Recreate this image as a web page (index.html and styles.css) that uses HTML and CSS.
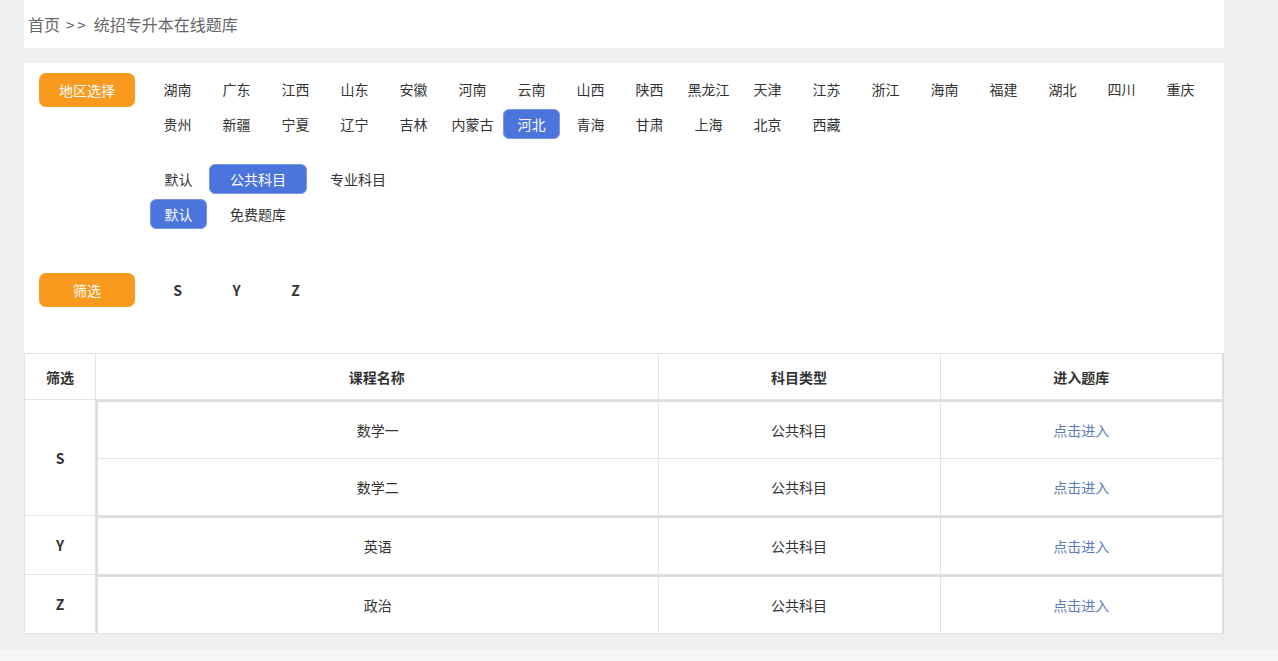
FILE: index.html
```html
<!DOCTYPE html>
<html lang="zh-CN">
<head>
<meta charset="utf-8">
<title>统招专升本在线题库</title>
<link rel="stylesheet" href="styles.css">
</head>
<body>
<div class="wrap">
  <div class="crumb">首页<span class="sep">&gt;&gt;</span>统招专升本在线题库</div>
  <div class="panel">
    <div class="panel-top">
      <div class="row">
        <div class="tag">地区选择</div>
        <div class="opts">
          <div class="regions">
            <span class="opt">湖南</span><span class="opt">广东</span><span class="opt">江西</span><span class="opt">山东</span><span class="opt">安徽</span><span class="opt">河南</span><span class="opt">云南</span><span class="opt">山西</span><span class="opt">陕西</span><span class="opt">黑龙江</span><span class="opt">天津</span><span class="opt">江苏</span><span class="opt">浙江</span><span class="opt">海南</span><span class="opt">福建</span><span class="opt">湖北</span><span class="opt">四川</span><span class="opt">重庆</span><span class="opt">贵州</span><span class="opt">新疆</span><span class="opt">宁夏</span><span class="opt">辽宁</span><span class="opt">吉林</span><span class="opt">内蒙古</span><span class="opt active">河北</span><span class="opt">青海</span><span class="opt">甘肃</span><span class="opt">上海</span><span class="opt">北京</span><span class="opt">西藏</span>
          </div>
          <div class="subjects">
            <div class="line"><span class="opt">默认</span><span class="opt wide active">公共科目</span><span class="opt wide">专业科目</span></div>
            <div class="line"><span class="opt active">默认</span><span class="opt wide">免费题库</span></div>
          </div>
        </div>
      </div>
      <div class="row filter">
        <div class="tag">筛选</div>
        <div class="letters"><span class="opt b">S</span><span class="opt b">Y</span><span class="opt b">Z</span></div>
      </div>
    </div>
    <table class="grid">
      <colgroup><col class="c0"><col></colgroup>
      <thead>
        <tr><th class="first">筛选</th><th class="inner-cell">
          <table class="inner head"><colgroup><col class="c1"><col class="c2"><col class="c3"></colgroup>
            <tr><th>课程名称</th><th>科目类型</th><th>进入题库</th></tr>
          </table>
        </th></tr>
      </thead>
      <tbody>
        <tr><td class="first b">S</td><td class="inner-cell">
          <table class="inner body"><colgroup><col class="c1b"><col class="c2"><col class="c3"></colgroup>
            <tr><td>数学一</td><td>公共科目</td><td><a href="#">点击进入</a></td></tr>
            <tr class="last"><td>数学二</td><td>公共科目</td><td><a href="#">点击进入</a></td></tr>
          </table>
        </td></tr>
        <tr><td class="first b">Y</td><td class="inner-cell">
          <table class="inner body"><colgroup><col class="c1b"><col class="c2"><col class="c3"></colgroup>
            <tr><td>英语</td><td>公共科目</td><td><a href="#">点击进入</a></td></tr>
          </table>
        </td></tr>
        <tr><td class="first b">Z</td><td class="inner-cell">
          <table class="inner body"><colgroup><col class="c1b"><col class="c2"><col class="c3"></colgroup>
            <tr><td>政治</td><td>公共科目</td><td><a href="#">点击进入</a></td></tr>
          </table>
        </td></tr>
      </tbody>
    </table>
  </div>
</div>
<div class="footer"></div>
</body>
</html>
```
FILE: styles.css
```css
html, body {
  margin: 0;
  padding: 0;
  background: #efefef;
  font-family: "Microsoft YaHei", "Noto Sans CJK SC", sans-serif;
  color: #333;
  font-size: 14px;
}
.wrap {
  width: 1200px;
  margin-left: 24px;
}
.crumb {
  background: #fff;
  height: 48px;
  line-height: 48px;
  padding-left: 4px;
  font-size: 16px;
  color: #666;
}
.sep {
  margin: 0 5px 0 6px;
  letter-spacing: 3px;
  font-size: 15px;
}
.panel {
  background: #fff;
  margin-top: 15px;
}
.panel-top {
  padding: 10px 15px 46px;
}
.row {
  display: flex;
  align-items: flex-start;
}
.tag {
  width: 96px;
  height: 34px;
  line-height: 34px;
  border-radius: 7px;
  background: #f99a1e;
  color: #fff;
  text-align: center;
  font-size: 14px;
  flex: none;
  margin-right: 14px;
}
.opts {
  margin-top: 1px;
}
.regions {
  display: flex;
  flex-wrap: wrap;
  width: 1065px;
}
.opt {
  display: inline-block;
  width: 57px;
  height: 30px;
  line-height: 30px;
  margin: 0 2px 5px 0;
  text-align: center;
  border-radius: 6px;
  color: #333;
  box-sizing: border-box;
}
.opt.wide {
  width: 98px;
}
.opt.active {
  background: #4c74dd;
  color: #fff;
  border: 1px solid #7b98e6;
  line-height: 28px;
}
.subjects {
  margin-top: 20px;
  margin-left: 1px;
}
.line {
  display: flex;
}
.filter {
  margin-top: 39px;
  align-items: center;
}
.letters {
  display: flex;
}
.letters .opt {
  margin-bottom: 0;
}
.b {
  font-weight: bold;
}
.grid {
  width: 1200px;
  border-collapse: collapse;
  border: 1px solid #e2e2e2;
  border-right: 2px solid #dcdcdc;
  table-layout: fixed;
}
.c0 { width: 71px; }
.c1 { width: 562px; }
.c1b { width: 561px; }
.c2 { width: 282px; }
.c3 { width: 282px; }
.grid td.first, .grid th.first {
  border: 1px solid #e2e2e2;
  text-align: center;
  padding: 0;
}
.grid th {
  font-weight: bold;
}
.inner-cell {
  padding: 0;
  border: 1px solid #e2e2e2;
}
.inner {
  width: 100%;
  border-collapse: collapse;
  table-layout: fixed;
}
.inner.body {
  border-top: 2px solid #dcdcdc;
  border-left: 2px solid #dcdcdc;
}
.inner td, .inner th {
  text-align: center;
  border-left: 1px solid #e4e4e4;
  border-top: 1px solid #e4e4e4;
  padding: 0;
}
.inner th {
  height: 45px;
}
.inner tr:first-child td, .inner tr:first-child th {
  border-top: 0;
}
.inner td:first-child, .inner th:first-child {
  border-left: 0;
}
.inner td {
  height: 56px;
}
.inner tr.last td {
  height: 56px;
}
.inner a {
  color: #5a7ab8;
  text-decoration: none;
}
.footer {
  margin-top: 16px;
  height: 40px;
  background: #f7f7f7;
}
```
